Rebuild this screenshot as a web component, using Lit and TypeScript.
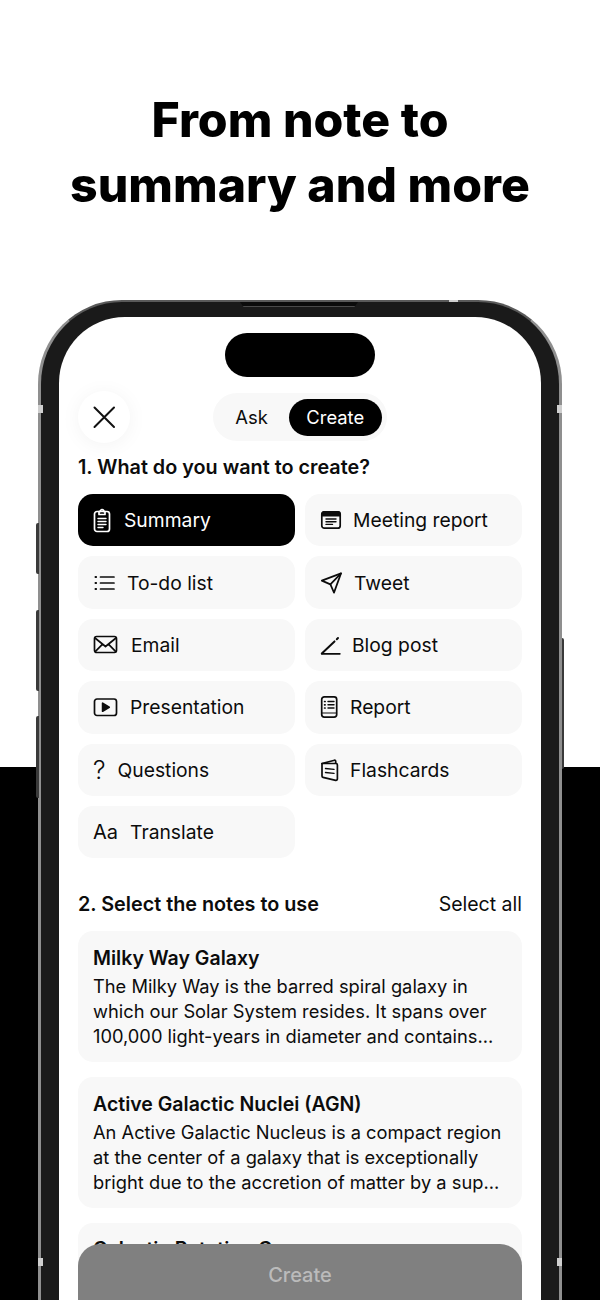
import { LitElement, html, css, svg } from "lit";
import { customElement } from "lit/decorators.js";

const S = (body: unknown, w = 24, h = 24) =>
  html`<svg class="ic" width=${w} height=${h} viewBox="0 0 ${w} ${h}" fill="none" stroke="currentColor" stroke-width="1.7" stroke-linecap="round" stroke-linejoin="round">${body}</svg>`;

const icons: Record<string, unknown> = {
  summary: S(svg`<rect x="1.5" y="3.5" width="15" height="20" rx="2.5"/><path d="M6 3.5h1.2a1.8 1.8 0 0 1 3.6 0H12v3H6z"/><path d="M5 10.5h8M5 13.5h8M5 16.5h8M5 19.5h5" stroke-width="1.4"/>`, 18, 25),
  meeting: S(svg`<rect x="1.8" y="2.8" width="18.4" height="16.4" rx="2.5"/><path d="M2 4.6a2 2 0 0 1 2-1.8h14a2 2 0 0 1 2 1.8V6.6H2z" fill="currentColor"/><path d="M6 10h10M6 12.7h10M6 15.4h6.5" stroke-width="1.4"/>`, 22, 22),
  todo: S(svg`<path d="M7.5 6h13.5M7.5 12h13.5M7.5 18h13.5"/><path d="M2.5 6h.6M2.5 12h.6M2.5 18h.6" stroke-width="2"/>`, 22, 24),
  tweet: S(svg`<path d="M1.8 9.6 21 2.4 14 21.6l-3.6-8.2z"/><path d="M10.4 13.4 21 2.4"/>`, 22, 24),
  email: S(svg`<rect x="1.5" y="3.5" width="22" height="16" rx="2.2"/><path d="m2 5 10.5 8.5L23 5M2.2 18.6l7.4-7.4M22.8 18.6l-7.4-7.4"/>`, 25, 23),
  blog: S(svg`<path d="M1.8 20.4 14.5 8.4M16.8 6.2l1.2-1.2" stroke-width="2"/><path d="M1.8 20.8h18" stroke-width="1.8"/>`, 22, 24),
  presentation: S(svg`<rect x="1.5" y="3" width="22" height="16.5" rx="2.5"/><path d="M9.6 7.2v8l6.6-4z" fill="currentColor"/>`, 25, 23),
  report: S(svg`<rect x="1.7" y="1.8" width="15" height="20.4" rx="2.6"/><path d="M8 6.5h6M8 9.8h6M8 13h6" stroke-width="1.4"/><path d="M4.6 6.5h.5M4.6 9.8h.5M4.6 13h.5" stroke-width="1.7"/><path d="M2 18h14" stroke-width="1.2"/>`, 19, 24),
  flash: S(svg`<path d="M2 5.5 14.5 2.2a1 1 0 0 1 1.2 1V5.2"/><path d="M2 5.5 16 5.5a1.4 1.4 0 0 1 1.4 1.4V21a1.4 1.4 0 0 1-1.7 1.3L3 19.4a1.3 1.3 0 0 1-1-1.3z"/><path d="M5.5 10.5 14 11.4M5.5 14.5 14 15.4" stroke-width="1.4"/>`, 19, 24),
};

const options = [
  { label: "Summary", icon: "summary", gap: 13, active: true },
  { label: "Meeting report", icon: "meeting", gap: 11 },
  { label: "To-do list", icon: "todo", gap: 12 },
  { label: "Tweet", icon: "tweet", gap: 12 },
  { label: "Email", icon: "email", gap: 13 },
  { label: "Blog post", icon: "blog", gap: 10 },
  { label: "Presentation", icon: "presentation", gap: 12 },
  { label: "Report", icon: "report", gap: 11 },
  { label: "Questions", text: "?", gap: 12 },
  { label: "Flashcards", icon: "flash", gap: 11 },
  { label: "Translate", text: "Aa", gap: 12 },
];

const notes = [
  {
    title: "Milky Way Galaxy",
    lines: [
      "The Milky Way is the barred spiral galaxy in",
      "which our Solar System resides. It spans over",
      "100,000 light-years in diameter and contains...",
    ],
  },
  {
    title: "Active Galactic Nuclei (AGN)",
    lines: [
      "An Active Galactic Nucleus is a compact region",
      "at the center of a galaxy that is exceptionally",
      "bright due to the accretion of matter by a sup...",
    ],
  },
  { title: "Galactic Rotation C", lines: [] as string[] },
];

@customElement("app-root")
export class AppRoot extends LitElement {
  static styles = css`
    :host {
      display: block;
      width: 600px;
      height: 1300px;
      overflow: hidden;
      position: relative;
      font-family: Inter, "Liberation Sans", sans-serif;
      color: #0c0c0c;
      background: linear-gradient(#fff 0, #fff 767px, #000 767px, #000 100%);
    }
    .headline {
      height: 300px;
      box-sizing: border-box;
      padding-top: 88px;
      margin: 0;
      text-align: center;
      font-family: Inter, sans-serif;
      font-weight: 800;
      font-size: 48.2px;
      line-height: 64.5px;
      color: #000;
    }
    .phone {
      position: relative;
      box-sizing: border-box;
      width: 524px;
      height: 1120px;
      margin-left: 38px;
      padding: 15px 18px 0;
      background: #1a1a1a;
      border: 3px solid #8f8f8f;
      border-top: 2px solid #5a5a5a;
      border-radius: 84px;
    }
    .slot {
      position: absolute;
      left: 199px;
      top: 0;
      width: 118px;
      height: 4px;
      background: #0b0b0b;
      border-bottom: 1px solid #4a4a4a;
      clip-path: polygon(0 0, 100% 0, 97% 100%, 3% 100%);
    }
    .band {
      position: absolute;
      background: #cfcfcf;
    }
    .band.l1 { left: -3px; top: 103px; width: 5px; height: 8px; }
    .band.r1 { right: -3px; top: 103px; width: 5px; height: 8px; }
    .band.t1 { right: 101px; top: -2px; width: 9px; height: 2px; }
    .band.l2 { left: -3px; top: 956px; width: 5px; height: 8px; }
    .band.r2 { right: -3px; top: 956px; width: 5px; height: 8px; }
    .key {
      position: absolute;
      width: 2.5px;
      background: #3a3a3a;
      border-radius: 2px 0 0 2px;
    }
    .key.a { left: -5px; top: 221px; height: 51px; }
    .key.b { left: -5px; top: 308px; height: 81px; }
    .key.c { left: -5px; top: 414px; height: 82px; }
    .key.d { right: -5px; top: 336px; height: 131px; border-radius: 0 2px 2px 0; }
    .screen {
      position: relative;
      box-sizing: border-box;
      height: 1200px;
      padding: 16px 19px 0;
      background: #fff;
      border-radius: 66px;
      overflow: hidden;
    }
    .island {
      width: 150px;
      height: 44px;
      margin: 0 auto;
      background: #000;
      border-radius: 22px;
    }
    .top {
      display: grid;
      grid-template-columns: 1fr auto 1fr;
      align-items: center;
      margin-top: 14px;
      height: 52px;
    }
    .close {
      width: 52px;
      height: 52px;
      border-radius: 50%;
      background: #fff;
      box-shadow: 0 2px 20px rgba(0, 0, 0, 0.05);
      display: flex;
      align-items: center;
      justify-content: center;
      color: #111;
    }
    .toggle {
      display: flex;
      align-items: center;
      box-sizing: border-box;
      height: 48px;
      padding: 0 5px 0 22px;
      gap: 21px;
      background: #f8f8f8;
      border-radius: 24px;
      font-size: 18.4px;
      font-weight: 400;
    }
    .toggle .on {
      background: #000;
      color: #fff;
      height: 37px;
      width: 93px;
      border-radius: 19px;
      display: flex;
      align-items: center;
      justify-content: center;
    }
    h2 {
      margin: 0;
      font-size: 19.8px;
      font-weight: 600;
      line-height: 26px;
    }
    .h1 { margin-top: 11px; }
    .grid {
      display: grid;
      grid-template-columns: 217px 217px;
      gap: 10px;
      margin-top: 14px;
    }
    .opt {
      height: 52.4px;
      box-sizing: border-box;
      display: flex;
      align-items: center;
      padding: 0 0 0 15px;
      background: #f8f8f8;
      border-radius: 15px;
      font-size: 19.3px;
      font-weight: 400;
      white-space: nowrap;
    }
    .opt.active {
      background: #000;
      color: #fff;
    }
    .ic { flex: none; display: block; }
    .glyph { font-size: 20px; }
    .glyph.q { font-size: 25px; font-weight: 300; }
    .sect {
      display: flex;
      justify-content: space-between;
      align-items: center;
      margin-top: 33px;
    }
    .sect span {
      font-size: 19.5px;
      font-weight: 400;
    }
    .notes {
      display: flex;
      flex-direction: column;
      gap: 15.2px;
      margin-top: 14px;
    }
    .note {
      box-sizing: border-box;
      height: 130.5px;
      padding: 13.5px 14px 0 15px;
      background: #f8f8f8;
      border-radius: 15px;
    }
    .note b {
      display: block;
      font-size: 19.5px;
      font-weight: 600;
      line-height: 26px;
      margin-bottom: 3px;
    }
    .note div {
      font-size: 18.3px;
      line-height: 25.3px;
      white-space: nowrap;
    }
    .cta {
      position: absolute;
      left: 19px;
      top: 927px;
      width: 444px;
      height: 100px;
      background: #808080;
      border-radius: 22px;
      color: #bbb;
      font-size: 20px;
      font-weight: 500;
      text-align: center;
      padding-top: 18px;
      box-sizing: border-box;
      line-height: 26px;
    }
  `;

  render() {
    return html`
      <h1 class="headline">From note to<br />summary and more</h1>
      <div class="phone">
        <i class="slot"></i>
        <i class="band l1"></i><i class="band r1"></i><i class="band t1"></i>
        <i class="band l2"></i><i class="band r2"></i>
        <i class="key a"></i><i class="key b"></i><i class="key c"></i><i class="key d"></i>
        <div class="screen">
          <div class="island"></div>
          <div class="top">
            <div class="close">
              <svg width="24" height="24" viewBox="0 0 24 24" fill="none" stroke="currentColor" stroke-width="2" stroke-linecap="round">
                <path d="M2.5 2.5l19.5 19.5M22 2.5 2.5 22" />
              </svg>
            </div>
            <div class="toggle"><span>Ask</span><span class="on">Create</span></div>
            <div></div>
          </div>
          <h2 class="h1">1. What do you want to create?</h2>
          <div class="grid">
            ${options.map(
              (o) => html`<div class="opt ${o.active ? "active" : ""}">
                ${o.text
                  ? html`<span class="glyph ${o.text === "?" ? "q" : ""}">${o.text}</span>`
                  : icons[o.icon as string]}
                <span style="margin-left:${o.gap}px">${o.label}</span>
              </div>`
            )}
          </div>
          <div class="sect"><h2>2. Select the notes to use</h2><span>Select all</span></div>
          <div class="notes">
            ${notes.map(
              (n) => html`<div class="note">
                <b>${n.title}</b>
                ${n.lines.map((l) => html`<div>${l}</div>`)}
              </div>`
            )}
          </div>
          <div class="cta">Create</div>
        </div>
      </div>
    `;
  }
}
